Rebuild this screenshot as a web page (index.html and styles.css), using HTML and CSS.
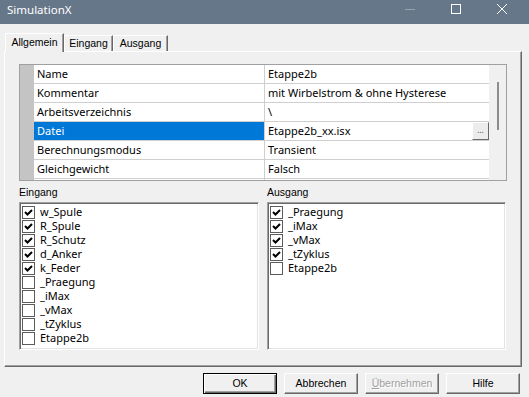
FILE: index.html
```html
<!DOCTYPE html>
<html lang="de">
<head>
  <meta charset="UTF-8">
  <title>SimulationX</title>
  <link rel="stylesheet" href="styles.css">
</head>
<body>
  <!-- Title bar -->
  <div class="titlebar">
    <span class="title">SimulationX</span>
    <div class="controls">
      <div class="ctrl">
        <svg width="10" height="10" viewBox="0 0 10 10"><line x1="0" y1="5.5" x2="10" y2="5.5" stroke="#97a3b1" stroke-width="1"/></svg>
      </div>
      <div class="ctrl">
        <svg width="10" height="10" viewBox="0 0 10 10"><rect x="0.5" y="0.5" width="9" height="9" fill="none" stroke="#fff" stroke-width="1"/></svg>
      </div>
      <div class="ctrl">
        <svg width="10" height="10" viewBox="0 0 10 10"><path d="M0 0 L10 10 M10 0 L0 10" stroke="#fff" stroke-width="1"/></svg>
      </div>
    </div>
  </div>

  <!-- Tabs -->
  <div class="tabs">
    <div class="tab active tab-allgemein">Allgemein</div>
    <div class="tab tab-eingang">Eingang</div>
    <div class="tab tab-ausgang">Ausgang</div>
  </div>

  <div class="panel">
    <!-- Property grid -->
    <div class="grid">
      <div class="gutter"></div>
      <div class="rows">
        <div class="row"><div class="name">Name</div><div class="value">Etappe2b</div></div>
        <div class="row"><div class="name">Kommentar</div><div class="value">mit Wirbelstrom &amp; ohne Hysterese</div></div>
        <div class="row"><div class="name">Arbeitsverzeichnis</div><div class="value">\</div></div>
        <div class="row"><div class="name selected">Datei</div><div class="value">Etappe2b_xx.isx<span class="dots">...</span></div></div>
        <div class="row"><div class="name">Berechnungsmodus</div><div class="value">Transient</div></div>
        <div class="row"><div class="name">Gleichgewicht</div><div class="value">Falsch</div></div>
        <div class="row"><div class="name"></div><div class="value"></div></div>
      </div>
      <div class="scroll"><div class="thumb"></div></div>
    </div>

    <!-- Input / output lists -->
    <div class="lists">
      <div class="group">
        <div class="group-label">Eingang</div>
        <div class="listbox">
          <div class="item"><span class="box checked"></span>w_Spule</div>
          <div class="item"><span class="box checked"></span>R_Spule</div>
          <div class="item"><span class="box checked"></span>R_Schutz</div>
          <div class="item"><span class="box checked"></span>d_Anker</div>
          <div class="item"><span class="box checked"></span>k_Feder</div>
          <div class="item"><span class="box"></span>_Praegung</div>
          <div class="item"><span class="box"></span>_iMax</div>
          <div class="item"><span class="box"></span>_vMax</div>
          <div class="item"><span class="box"></span>_tZyklus</div>
          <div class="item"><span class="box"></span>Etappe2b</div>
        </div>
      </div>
      <div class="group">
        <div class="group-label">Ausgang</div>
        <div class="listbox">
          <div class="item"><span class="box checked"></span>_Praegung</div>
          <div class="item"><span class="box checked"></span>_iMax</div>
          <div class="item"><span class="box checked"></span>_vMax</div>
          <div class="item"><span class="box checked"></span>_tZyklus</div>
          <div class="item"><span class="box"></span>Etappe2b</div>
        </div>
      </div>
    </div>
  </div>

  <!-- Dialog buttons -->
  <div class="buttons">
    <div class="btn default">OK</div>
    <div class="btn">Abbrechen</div>
    <div class="btn disabled"><u>Ü</u>bernehmen</div>
    <div class="btn">Hilfe</div>
  </div>
</body>
</html>
```

FILE: styles.css
```css
/* Reset and window body */
* {
  box-sizing: border-box;
}

html, body {
  margin: 0;
  padding: 0;
}

body {
  width: 529px;
  height: 397px;
  overflow: hidden;
  background-color: #f0f0f0;
  color: #000;
  font-family: "Liberation Sans", Arial, sans-serif;
  font-size: 10.5px;
}

/* Title bar */
.titlebar {
  height: 24px;
  padding-bottom: 6px;
  display: flex;
  align-items: center;
  background-color: #67778a;
  color: #fff;
}

.title {
  flex: 1;
  padding-left: 7px;
  font-family: "Noto Sans", sans-serif;
  font-size: 11.5px;
}

.controls {
  display: flex;
  padding-right: 4px;
}

.ctrl {
  width: 46px;
  height: 18px;
  display: flex;
  align-items: center;
  justify-content: center;
}

/* Tabs */
.tabs {
  height: 27px;
  padding-left: 5px;
  display: flex;
  align-items: flex-end;
}

.tab {
  height: 16px;
  line-height: 15px;
  text-align: center;
  border: 1px solid;
  border-bottom: none;
  border-color: #fff #696969 transparent #fff;
  box-shadow: inset -1px 0 #a0a0a0;
}

.tab.active {
  position: relative;
  z-index: 1;
  height: 19px;
  margin-bottom: -1px;
  line-height: 17px;
  background-color: #f0f0f0;
}

.tab-allgemein { width: 59px; }
.tab-eingang { width: 49px; }
.tab-ausgang { width: 55px; }

/* Tab page */
.panel {
  width: 518px;
  height: 316px;
  margin-left: 4px;
  padding: 12px 14px 0 14px;
  border: 1px solid;
  border-color: #fff #696969 #696969 #fff;
  box-shadow: inset -1px -1px #a0a0a0;
}

/* Property grid */
.grid {
  height: 117px;
  display: flex;
  border: 1px solid #a0a0a0;
  background-color: #fff;
  overflow: hidden;
  font-family: "Noto Sans", sans-serif;
  font-size: 11px;
}

.gutter {
  width: 14px;
  flex: none;
  background-color: #c4c4c4;
}

.rows {
  flex: 1;
}

.row {
  height: 19px;
  display: grid;
  grid-template-columns: 231px 1fr;
  border-bottom: 1px solid #cfcfcf;
}

.name {
  padding-left: 3px;
  line-height: 18px;
  border-right: 1px solid #cfcfcf;
}

.name.selected {
  background-color: #0078d7;
  color: #fff;
}

.value {
  display: flex;
  padding-left: 3px;
  line-height: 18px;
}

.dots {
  width: 17px;
  height: 18px;
  margin-left: auto;
  border: 1px solid;
  border-color: #fff #696969 #696969 #fff;
  background-color: #ececec;
  font-size: 8px;
  line-height: 14px;
  text-align: center;
  color: #444;
}

.scroll {
  width: 17px;
  flex: none;
  background-color: #f0f0f0;
}

.thumb {
  width: 2px;
  height: 48px;
  margin: 17px 0 0 8px;
  background-color: #8d8d8d;
}

/* Eingang / Ausgang lists */
.lists {
  margin-top: 5px;
  display: grid;
  grid-template-columns: 240px 239px;
  column-gap: 8px;
}

.group-label {
  height: 16px;
  line-height: 13px;
}

.listbox {
  height: 148px;
  padding: 3px 0 0 2px;
  background-color: #fff;
  border: 1px solid;
  border-color: #a0a0a0 #fff #fff #a0a0a0;
  box-shadow: inset 1px 1px #696969, inset -1px -1px #e3e3e3;
  font-family: "Noto Sans", sans-serif;
  font-size: 11px;
}

.item {
  height: 14px;
  display: flex;
  line-height: 12px;
}

.box {
  width: 13px;
  height: 13px;
  flex: none;
  margin-right: 5px;
  border: 1px solid #5c5c5c;
  background-color: #fff;
}

.box.checked {
  background-image: url("data:image/svg+xml,%3Csvg xmlns='http://www.w3.org/2000/svg' width='11' height='11'%3E%3Cpath d='M2 5 L4.5 7.5 L9 3' fill='none' stroke='%23000' stroke-width='2'/%3E%3C/svg%3E");
  background-repeat: no-repeat;
}

/* Dialog buttons */
.buttons {
  margin-top: 6px;
  padding-right: 9px;
  display: flex;
  justify-content: flex-end;
  gap: 7px;
}

.btn {
  width: 74px;
  height: 21px;
  line-height: 19px;
  text-align: center;
  border: 1px solid;
  border-color: #fff #696969 #696969 #fff;
  box-shadow: inset -1px -1px #a0a0a0;
}

.btn.default {
  border-color: #000;
  box-shadow: inset 1px 1px #fff, inset -1px -1px #696969, inset -2px -2px #a0a0a0;
}

.btn.disabled {
  color: #a0a0a0;
  text-shadow: 1px 1px #fff;
}
```
